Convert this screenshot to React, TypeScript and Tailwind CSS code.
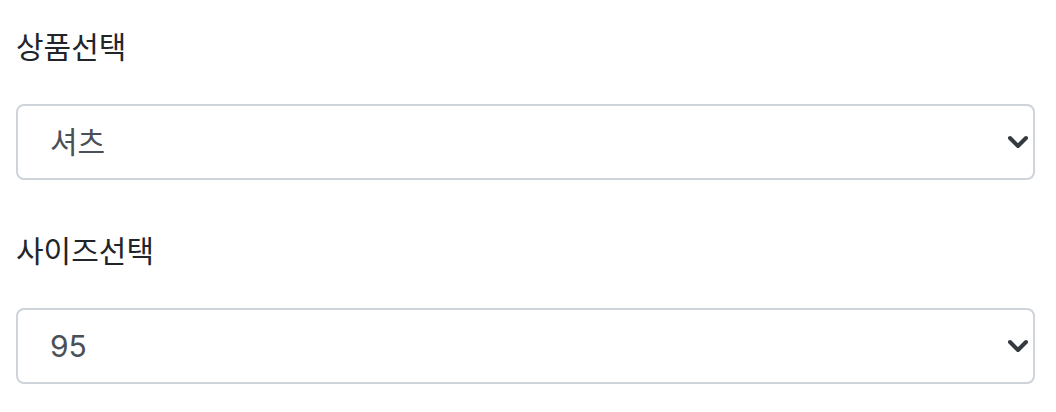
import { useState } from 'react';

const products = ['셔츠', '바지', '자켓'];
const sizes = ['90', '95', '100', '105'];

const Chevron = () => (
  <svg
    className="pointer-events-none absolute right-[6px] top-1/2 -translate-y-1/2"
    width="22"
    height="14"
    viewBox="0 0 22 14"
    fill="none"
  >
    <path d="M3 3l8 8 8-8" stroke="#343a40" strokeWidth="4" strokeLinecap="round" strokeLinejoin="round" />
  </svg>
);

const Field = ({
  label,
  value,
  options,
  onChange,
}: {
  label: string;
  value: string;
  options: string[];
  onChange: (v: string) => void;
}) => (
  <div className="flex flex-col">
    <label className="text-[30px] leading-[48px] text-[#212529] mb-[32px]">{label}</label>
    <div className="relative">
      <select
        value={value}
        onChange={e => onChange(e.target.value)}
        className="w-full h-[76px] appearance-none rounded-[8px] border-2 border-[#ced4da] bg-white pl-[32px] pr-[60px] text-[30px] text-[#495057] outline-none font-['Inter','Noto_Sans_CJK_KR',sans-serif]"
      >
        {options.map(o => (
          <option key={o} value={o}>{o}</option>
        ))}
      </select>
      <Chevron />
    </div>
  </div>
);

export default function App() {
  const [product, setProduct] = useState('셔츠');
  const [size, setSize] = useState('95');

  return (
    <div
      className="bg-white pl-4 pr-[21px] pt-6 flex flex-col gap-[48px]"
      style={{ fontFamily: '"Liberation Sans", "Noto Sans CJK KR", sans-serif' }}
    >
      <Field label="상품선택" value={product} options={products} onChange={setProduct} />
      <Field label="사이즈선택" value={size} options={sizes} onChange={setSize} />
    </div>
  );
}
